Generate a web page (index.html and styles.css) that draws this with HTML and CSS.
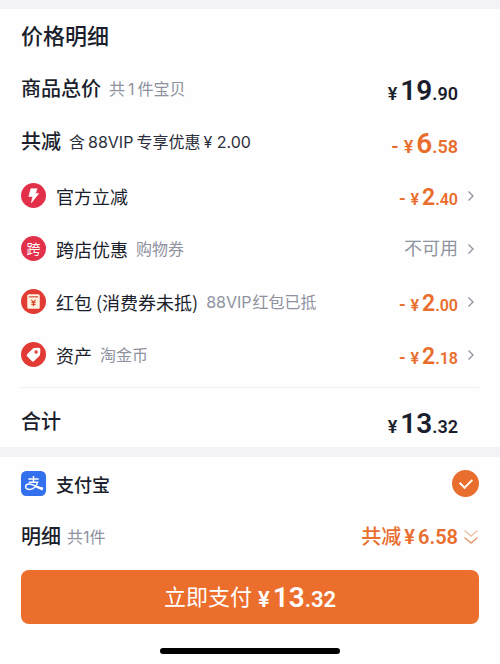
FILE: index.html
```html
<!DOCTYPE html>
<html lang="zh-CN">
<head>
<meta charset="utf-8">
<meta name="viewport" content="width=device-width, initial-scale=1">
<title>价格明细</title>
<link rel="stylesheet" href="styles.css">
</head>
<body>
<main>
  <section class="card prices">
    <h1 class="row title">价格明细</h1>
    <div class="row">
      <h2 class="label">商品总价</h2><span class="note">共<span class="latin">1</span>件宝贝</span>
      <span class="price large"><span class="yen">¥</span><span class="whole">19</span><span class="cents">.90</span></span>
    </div>
    <div class="row">
      <h2 class="label">共减</h2><span class="note dark">含<span class="latin">88VIP</span>专享优惠<span class="latin">¥ 2.00</span></span>
      <span class="price large off"><span class="minus">-</span><span class="yen">¥</span><span class="whole">6</span><span class="cents">.58</span></span>
    </div>
    <ul class="discounts">
      <li><a class="row" href="#official">
        <svg class="icon" viewBox="0 0 24 24" aria-hidden="true"><circle cx="12" cy="12" r="12" fill="#e2304a"/><path d="M9.500 5.500H15.500L13.800 10H17L10 19l1.300-6H7.500z" fill="#fff" stroke="#fff" stroke-width=".6" stroke-linejoin="round"/></svg>
        <span class="name">官方立减</span>
        <span class="price off"><span class="minus">-</span><span class="yen">¥</span><span class="whole">2</span><span class="cents">.40</span></span>
        <svg class="chevron" viewBox="0 0 8 12" aria-hidden="true"><path d="M1.500 1.500 6 6l-4.500 4.500"/></svg>
      </a></li>
      <li><a class="row" href="#cross-store">
        <span class="icon cross" aria-hidden="true">跨</span>
        <span class="name">跨店优惠</span><span class="note">购物券</span>
        <span class="status">不可用</span>
        <svg class="chevron" viewBox="0 0 8 12" aria-hidden="true"><path d="M1.500 1.500 6 6l-4.500 4.500"/></svg>
      </a></li>
      <li><a class="row" href="#red-packet">
        <svg class="icon" viewBox="0 0 24 24" aria-hidden="true"><circle cx="12" cy="12" r="12" fill="#e23a34"/><rect x="6" y="5" width="12" height="14" rx="1.500" fill="#fff3df"/><path d="M7.500 7.500h9" stroke="#d9564a" stroke-width="1.200"/><path d="M10 10.500l2 2.300 2-2.300M12 12.800v3.700M10 13h4M10 14.800h4" fill="none" stroke="#d9482f" stroke-width="1.100"/></svg>
        <span class="name">红包 (消费券未抵)</span><span class="note"><span class="latin first">88VIP</span>红包已抵</span>
        <span class="price off"><span class="minus">-</span><span class="yen">¥</span><span class="whole">2</span><span class="cents">.00</span></span>
        <svg class="chevron" viewBox="0 0 8 12" aria-hidden="true"><path d="M1.500 1.500 6 6l-4.500 4.500"/></svg>
      </a></li>
      <li><a class="row" href="#coins">
        <svg class="icon" viewBox="0 0 24 24" aria-hidden="true"><circle cx="12" cy="12" r="12" fill="#e23a34"/><path d="M12.500 5.800 17 5.500q1.500 0 1.600 1.500L18.300 12q0 .7-.6 1.200l-5 5q-1.200 1.100-2.400 0l-4.300-4.300q-1.100-1.200 0-2.400l5.200-5q.6-.6 1.300-.7z" fill="#fff"/><circle cx="14.500" cy="9.600" r="1.600" fill="#e23a34"/></svg>
        <span class="name">资产</span><span class="note">淘金币</span>
        <span class="price off"><span class="minus">-</span><span class="yen">¥</span><span class="whole">2</span><span class="cents">.18</span></span>
        <svg class="chevron" viewBox="0 0 8 12" aria-hidden="true"><path d="M1.500 1.500 6 6l-4.500 4.500"/></svg>
      </a></li>
    </ul>
    <div class="row total">
      <h2 class="label">合计</h2>
      <span class="price large"><span class="yen">¥</span><span class="whole">13</span><span class="cents">.32</span></span>
    </div>
  </section>
  <section class="card payment">
    <label class="row method">
      <svg class="icon" viewBox="0 0 24 24" aria-hidden="true"><rect width="24" height="24" rx="5" fill="#3370ee"/><path d="M7 7.700h10M12 4.800v5.700M7.500 10.700h8.500c-1 3.700-4 7-7.500 7-2.500 0-4-1.100-4-2.600 0-1.600 1.400-2.600 3.400-2.600 3.700 0 7 3 13 4.300" fill="none" stroke="#fff" stroke-width="1.400"/><path d="M14.500 13.900q3 1.400 7 2.200l-1 2.500q-4-1.300-7.200-3.200z" fill="#fff"/></svg>
      <span class="name strong">支付宝</span>
      <input class="check" type="radio" name="method" checked>
    </label>
    <div class="row">
      <h2 class="label">明细</h2><span class="note tight">共1件</span>
      <button class="summary" type="button">共减<span class="amount"><span>¥</span><span>6.58</span></span>
        <svg class="expand" viewBox="0 0 16 16" aria-hidden="true"><path d="M1.500 1.500 8 7l6.500-5.500" opacity=".6"/><path d="M1.500 8.500 8 14l6.500-5.500"/></svg>
      </button>
    </div>
    <button class="pay" type="button">立即支付<span class="price large"><span class="yen">¥</span><span class="whole">13</span><span class="cents">.32</span></span></button>
  </section>
</main>
<div class="home-bar"></div>
</body>
</html>
```
FILE: styles.css
```css
* { box-sizing: border-box; }
body {
  margin: 0;
  background: #fefefe;
  color: #1b1e2c;
  font-family: Inter, "Noto Sans CJK SC", sans-serif;
  font-size: 18px;
  line-height: 24px;
}
h1, h2, ul { margin: 0; padding: 0; font-size: 20px; font-weight: 500; }
li { list-style: none; font-size: 18px; font-weight: 400; }
a { color: inherit; text-decoration: none; }
button { border: 0; padding: 0; background: none; font: inherit; cursor: pointer; }
.card { padding: 0 21px; border-top: 10px solid #f3f3f7; }
.prices { border-top-width: 9px; }
.row { display: flex; align-items: center; height: 53px; white-space: nowrap; }
.title { font-size: 22px; }
.label { font-size: 20px; }
.name { font-family: "Noto Sans CJK SC", sans-serif; }
.note { margin-left: 8px; font-size: 16px; color: #8f929f; }
.note.dark { color: #2b2e3b; }
.note.tight { margin-left: 6px; }
.latin { margin: 0 3px; }
.latin.first { margin: 0 1px 0 0; }
.discounts { margin-top: 1px; }
.icon { flex: none; width: 25px; height: 25px; margin-right: 10px; }
.cross {
  display: flex;
  align-items: center;
  justify-content: center;
  border-radius: 50%;
  background: #e2304a;
  color: #fff;
  font-size: 14px;
}
.strong { font-weight: 500; }
.price {
  display: flex;
  align-items: baseline;
  margin-left: auto;
  margin-right: 21px;
  padding-top: 6px;
  font-family: Roboto, sans-serif;
  font-weight: 600;
}
.off { color: #e96d2d; }
.yen { margin-right: 3px; font-size: 16px; }
.minus { margin-right: 5px; font-size: 18px; }
.whole { font-size: 23px; }
.cents { font-size: 16px; }
.large { padding-top: 8px; }
.large .yen { font-size: 18px; }
.large .minus { font-size: 20px; }
.large .whole { font-size: 28px; }
.large .cents { font-size: 18px; }
.status { margin-left: auto; margin-right: 21px; color: #8f929f; }
.chevron { flex: none; width: 8px; height: 12px; margin-left: -12px; margin-right: 4px; fill: none; stroke: #8f929f; stroke-width: 1.3; }
.total { height: 60px; margin-top: 6px; padding-top: 8px; border-top: 1px solid #eeeef1; }
.check {
  appearance: none;
  width: 27px;
  height: 27px;
  margin: 0 0 0 auto;
  border-radius: 50%;
  background: #e96d2d;
  display: grid;
  place-items: center;
}
.check::after {
  content: "";
  width: 10px;
  height: 6px;
  margin-bottom: 3px;
  border: solid #fff;
  border-width: 0 0 2px 2px;
  transform: rotate(-45deg);
}
.summary { display: flex; align-items: center; margin-left: auto; color: #e96d2d; font-size: 20px; font-weight: 500; }
.amount { display: flex; gap: 3px; margin: 0 5px 0 3px; font-family: Roboto, sans-serif; font-weight: 600; }
.expand { width: 16px; height: 16px; fill: none; stroke: #e39a70; stroke-width: 1.4; }
.pay {
  display: flex;
  align-items: center;
  justify-content: center;
  width: 100%;
  height: 54px;
  margin-top: 7px;
  border-radius: 8px;
  background: #ec6e2d;
  color: #fff;
  font-size: 22px;
}
.pay .price { margin: 0 0 0 6px; padding-top: 3px; }
.pay .yen, .pay .cents { font-size: 22px; }
.home-bar { width: 36%; height: 6px; margin: 24px auto 10px; border-radius: 3px; background: #000; }
```
